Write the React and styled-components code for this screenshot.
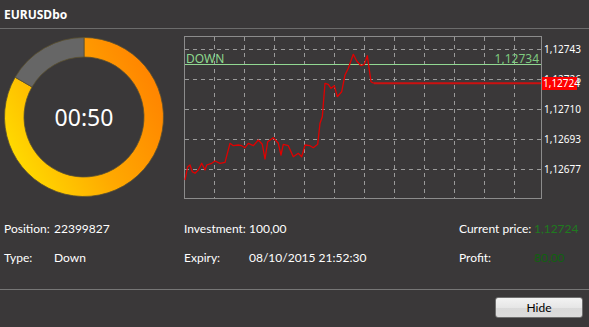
import React from 'react';
import styled, { createGlobalStyle } from 'styled-components';

const Global = createGlobalStyle`
  html, body {
    margin: 0;
    padding: 0;
    background: #3a3839;
    font-family: "Noto Sans", "Open Sans", sans-serif;
    color: #ffffff;
  }
`;

const Window = styled.div`
  width: 589px;
  height: 327px;
  background: #3a3839;
  display: flex;
  flex-direction: column;
`;

const TitleBar = styled.div`
  height: 28px;
  display: flex;
  align-items: center;
  padding-left: 4px;
  font-size: 12px;
  font-weight: 700;
  border-bottom: 1px solid #6c6c6c;
`;

const TopRow = styled.div`
  display: flex;
  align-items: flex-start;
  padding: 7px 0 0 4px;
  gap: 20px;
`;

const TimerBox = styled.div`
  position: relative;
  width: 160px;
  height: 160px;
  margin-top: 1px;
`;

const TimerText = styled.div`
  position: absolute;
  inset: 0;
  display: flex;
  align-items: center;
  justify-content: center;
  font-size: 23px;
  color: #ffffff;
`;

const Info = styled.div`
  display: grid;
  grid-template-columns: 180px 275px 1fr;
  margin-top: 15px;
  padding-left: 4px;
`;

const Field = styled.div`
  display: flex;
  height: 29px;
  align-items: center;
  font-family: Lato, "Noto Sans", sans-serif;
  font-size: 12px;
  white-space: nowrap;
`;

const Label = styled.span`
  width: ${p => p.w}px;
  flex: none;
`;

const Value = styled.span`
  color: ${p => p.color || '#ffffff'};
`;

const Footer = styled.div`
  margin-top: 17px;
  border-top: 1px solid #767676;
  display: flex;
  justify-content: flex-end;
  padding: 7px 6px 0 0;
`;

const Button = styled.button`
  width: 88px;
  height: 21px;
  border: 1px solid #707070;
  border-radius: 3px;
  background: linear-gradient(#f3f3f3, #e6e6e6 50%, #d9d9d9 51%, #dcdcdc);
  font-family: Lato, "Noto Sans", sans-serif;
  font-size: 12px;
  color: #000;
  padding: 0;
`;

const pt = (cx, cy, r, a) => {
  const rad = ((a - 90) * Math.PI) / 180;
  return [cx + r * Math.cos(rad), cy + r * Math.sin(rad)];
};

const sector = (a0, a1, ro, ri) => {
  const [x0, y0] = pt(80, 80, ro, a0);
  const [x1, y1] = pt(80, 80, ro, a1);
  const [x2, y2] = pt(80, 80, ri, a1);
  const [x3, y3] = pt(80, 80, ri, a0);
  const large = a1 - a0 > 180 ? 1 : 0;
  return `M${x0} ${y0} A${ro} ${ro} 0 ${large} 1 ${x1} ${y1} L${x2} ${y2} A${ri} ${ri} 0 ${large} 0 ${x3} ${y3}Z`;
};

const Donut = ({ seconds, total }) => {
  const end = (seconds / total) * 360;
  return (
    <TimerBox>
      <svg width="160" height="160" viewBox="0 0 160 160">
        <defs>
          <linearGradient id="ring" x1="0.9" y1="0.15" x2="0" y2="0.6">
            <stop offset="0" stopColor="#ff8400" />
            <stop offset="0.55" stopColor="#ffaa00" />
            <stop offset="1" stopColor="#ffd800" />
          </linearGradient>
        </defs>
        <path d={sector(0, end, 79.5, 60)} fill="url(#ring)" stroke="#5a5030" strokeWidth="0.8" />
        <path d={sector(end, 360, 79.5, 60)} fill="#666666" stroke="#5a5030" strokeWidth="0.8" />
      </svg>
      <TimerText>00:50</TimerText>
    </TimerBox>
  );
};

const prices = [
  [185, 180], [187.7, 166.7], [190, 165], [192.3, 171.7], [195, 173.3], [198.3, 170],
  [201.7, 163.3], [205, 170], [206.7, 165], [211.7, 163.3], [215, 161], [220, 163.3],
  [225, 162.3], [230, 143.3], [233.3, 145.7], [238.3, 145], [241.7, 145.7], [245, 147.7],
  [248.3, 143.3], [253.3, 145.7], [258.3, 140], [262.3, 144.3], [265, 159], [267.7, 141.7],
  [273.3, 137.7], [278.3, 143.3], [281, 155], [283.3, 144.3], [288.3, 145.7], [293.3, 156.7],
  [298.3, 153.3], [301.7, 156.7], [305, 145], [310, 145.7], [313.3, 147.7], [317.7, 144.3],
  [320, 123.3], [322.3, 116.7], [325, 83.3], [328.3, 84.3], [331, 88.3], [334.3, 85.7],
  [337.3, 96.7], [341.7, 91.7], [345, 75], [348.3, 68.3], [353.3, 54.3], [356.7, 61],
  [361, 65.7], [364.3, 64.3], [367.3, 55.7], [371, 81.7], [373.7, 83.3],
];

const axis = [
  ['1,12743', 13],
  ['1,12726', 43],
  ['1,12710', 73],
  ['1,12693', 103],
  ['1,12677', 133],
];

const Chart = () => {
  const line = prices.map(([x, y]) => `${x - 184},${y - 36}`).join(' ');
  const vx = Array.from({ length: 11 }, (_, i) => 30 + i * 30);
  return (
    <svg width="405" height="163" viewBox="0 0 405 163" style={{ fontFamily: '"Noto Sans", sans-serif' }}>
      {axis.map(([, y]) => (
        <line key={y} x1="1" x2="357" y1={y + 0.5} y2={y + 0.5} stroke="#9a9a9a" strokeDasharray="4 4" />
      ))}
      {vx.map(x => (
        <line key={x} x1={x + 0.5} x2={x + 0.5} y1="1" y2="162" stroke="#9a9a9a" strokeDasharray="4 4" />
      ))}
      <rect x="0.5" y="0.5" width="357" height="162" fill="none" stroke="#8c8c8c" />
      <line x1="1" x2="357" y1="28.5" y2="28.5" stroke="#92d892" />
      <text x="2" y="27" fontSize="12" fill="#8ed88e">DOWN</text>
      <text x="355" y="27" fontSize="12" fill="#7fca7f" textAnchor="end">1,12734</text>
      <polyline points={line} fill="none" stroke="#e00000" strokeWidth="1.3" strokeLinejoin="round" />
      <line x1={373.7 - 184} x2="357" y1="47.3" y2="47.3" stroke="#cc1010" strokeWidth="2" />
      {axis.map(([t, y]) => (
        <text key={t} x="360" y={y + 3.5} fontSize="10" fill="#ffffff">{t}</text>
      ))}
      <rect x="358" y="41" width="35" height="13" fill="#ff0000" />
      <text x="359" y="51" fontSize="10" fill="#ffffff">1,12724</text>
    </svg>
  );
};

export default function App() {
  return (
    <>
      <Global />
      <Window>
        <TitleBar>EURUSDbo</TitleBar>
        <TopRow>
          <Donut seconds={50} total={60} />
          <Chart />
        </TopRow>
        <Info>
          <Field><Label w={50}>Position:</Label><Value>22399827</Value></Field>
          <Field><Label w={65}>Investment:</Label><Value>100,00</Value></Field>
          <Field><Label w={75}>Current price:</Label><Value color="#1f7a1f">1,12724</Value></Field>
          <Field><Label w={50}>Type:</Label><Value>Down</Value></Field>
          <Field><Label w={65}>Expiry:</Label><Value>08/10/2015 21:52:30</Value></Field>
          <Field><Label w={75}>Profit:</Label><Value color="#0f620f">80,00</Value></Field>
        </Info>
        <Footer>
          <Button>Hide</Button>
        </Footer>
      </Window>
    </>
  );
}
